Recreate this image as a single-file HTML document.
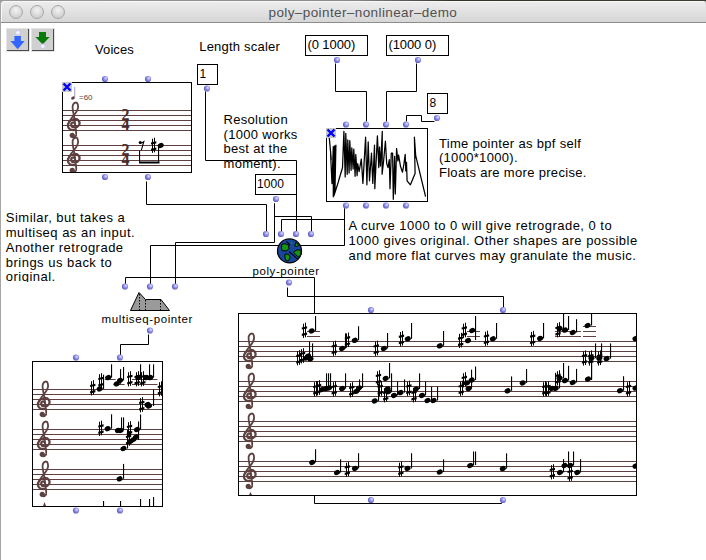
<!DOCTYPE html>
<html><head><meta charset="utf-8"><style>
html,body{margin:0;padding:0;background:#fff;}
body{width:706px;height:560px;position:relative;overflow:hidden;font-family:"Liberation Sans",sans-serif;}
svg{overflow:visible}
</style></head><body>

<div style="position:absolute;left:0;top:0;width:706px;height:1px;background:linear-gradient(to right,#9a9a9a 0%,#8a8a8a 50%,#30342a 64%,#3a4030 100%)"></div>
<div style="position:absolute;left:0;top:1px;width:706px;height:22px;background:#a6a6a6"></div>
<div style="position:absolute;left:1px;top:1px;width:705px;height:22px;border-radius:4px 4px 0 0;background:linear-gradient(#ededed,#d6d6d6);border-bottom:1px solid #8c8c8c;box-sizing:border-box;box-shadow:inset 1px 1px 0 #f8f8f8"></div>
<div style="position:absolute;left:0;top:1px;width:1px;height:559px;background:#a6a6a6"></div>
<div style="position:absolute;left:9px;top:5px;width:12px;height:12px;border-radius:50%;border:1px solid #a9a9a9;background:radial-gradient(circle at 50% 35%, #f4f4f4, #d0d0d0 70%, #c4c4c4)"></div><div style="position:absolute;left:30px;top:5px;width:12px;height:12px;border-radius:50%;border:1px solid #a9a9a9;background:radial-gradient(circle at 50% 35%, #f4f4f4, #d0d0d0 70%, #c4c4c4)"></div><div style="position:absolute;left:51px;top:5px;width:12px;height:12px;border-radius:50%;border:1px solid #a9a9a9;background:radial-gradient(circle at 50% 35%, #f4f4f4, #d0d0d0 70%, #c4c4c4)"></div><div style="position:absolute;left:6px;top:28px;width:24px;height:24px;box-sizing:border-box;background:#e3e3e3;padding:1px"><div style="width:22px;height:22px;background:#d0d0d0;box-shadow:inset -1px -1px 0 #4a4a4a"></div></div><div style="position:absolute;left:31px;top:28px;width:24px;height:24px;box-sizing:border-box;background:#e3e3e3;padding:1px"><div style="width:22px;height:22px;background:#d0d0d0;box-shadow:inset -1px -1px 0 #4a4a4a"></div></div>

<svg style="position:absolute;left:0;top:0" width="706" height="60">
 <rect x="14.4" y="36" width="6.5" height="5.5" fill="#3366ff"/>
 <polygon points="10.4,41 24.6,41 17.7,49.2" fill="#3366ff"/>
 <circle cx="17.9" cy="32.8" r="2.3" fill="#f4f4ff" stroke="#c8c8f4" stroke-width="1"/>
 <rect x="39" y="32" width="7" height="5.2" fill="#0a7a0a"/>
 <polygon points="35.4,37 49.6,37 42.7,44.5" fill="#0a7a0a"/>
 <circle cx="42.9" cy="46.3" r="2.3" fill="#f4f4ff" stroke="#c8c8f4" stroke-width="1"/>
</svg>
<svg style="position:absolute;left:0;top:0" width="706" height="560"><defs><clipPath id="clipBig"><rect x="239" y="314" width="397" height="181"/></clipPath><clipPath id="clipSmall"><rect x="33" y="362" width="129" height="144"/></clipPath><clipPath id="clipVoices"><rect x="63" y="83" width="128" height="89"/></clipPath><radialGradient id="ing" cx="0.62" cy="0.38" r="0.7">
<stop offset="0" stop-color="#e8e8ff"/><stop offset="0.4" stop-color="#9494ee"/><stop offset="1" stop-color="#5252b4"/></radialGradient></defs>
<polyline points="335.5,63.5 335.5,91.5 366.5,91.5 366.5,121.5" fill="none" stroke="#000" stroke-width="1"/><polyline points="416.5,63.5 416.5,91.5 386.5,91.5 386.5,121.5" fill="none" stroke="#000" stroke-width="1"/><polyline points="434.5,121.5 421.5,121.5 421.5,115.5 406.5,115.5 406.5,121.5" fill="none" stroke="#000" stroke-width="1"/><polyline points="205.5,91.5 205.5,160.5 296.5,160.5 296.5,231.5" fill="none" stroke="#000" stroke-width="1"/><polyline points="146.5,181.5 146.5,204.5 266.5,204.5 266.5,231.5" fill="none" stroke="#000" stroke-width="1"/><polyline points="274.5,203.5 274.5,216.5 311.5,216.5 311.5,231.5" fill="none" stroke="#000" stroke-width="1"/><polyline points="274.5,203.5 274.5,242.5 175.5,242.5 175.5,284.5" fill="none" stroke="#000" stroke-width="1"/><polyline points="344.5,208.5 344.5,219.5 281.5,219.5 281.5,231.5" fill="none" stroke="#000" stroke-width="1"/><polyline points="344.5,208.5 344.5,245.5 150.5,245.5 150.5,284.5" fill="none" stroke="#000" stroke-width="1"/><polyline points="287.5,287.5 287.5,296.5 503.5,296.5 503.5,308.5" fill="none" stroke="#000" stroke-width="1"/><polyline points="125.5,284.5 125.5,277.5 314.5,277.5 314.5,503.5 501.5,503.5 501.5,502.5" fill="none" stroke="#000" stroke-width="1"/><polyline points="148.5,334.5 148.5,344.5 120.5,344.5 120.5,355.5" fill="none" stroke="#000" stroke-width="1"/><rect x="62.5" y="82.5" width="129" height="90" fill="#fff" stroke="#000" stroke-width="1"/><g clip-path="url(#clipVoices)"><rect x="63" y="110" width="128" height="1" fill="#5e4040"/><rect x="63" y="115" width="128" height="1" fill="#5e4040"/><rect x="63" y="120" width="128" height="1" fill="#5e4040"/><rect x="63" y="125" width="128" height="1" fill="#5e4040"/><rect x="63" y="130" width="128" height="1" fill="#5e4040"/><rect x="63" y="145" width="128" height="1" fill="#5e4040"/><rect x="63" y="150" width="128" height="1" fill="#5e4040"/><rect x="63" y="155" width="128" height="1" fill="#5e4040"/><rect x="63" y="160" width="128" height="1" fill="#5e4040"/><rect x="63" y="165" width="128" height="1" fill="#5e4040"/><g transform="translate(67,110) scale(5)" fill="none" stroke="#5e4040" stroke-linecap="round"><path d="M1.6,2.75 C1.35,2.3 0.8,2.45 0.85,3.0 C0.95,3.6 2.0,3.7 2.4,3.05 C2.75,2.4 2.2,1.7 1.45,1.8 C0.6,1.9 0.1,2.6 0.2,3.25 C0.3,3.9 1.0,4.1 1.65,4.0" stroke-width="0.45"/><path d="M0.2,3.25 C0.2,2.3 0.9,1.6 1.5,0.9 C2.1,0.2 2.35,-0.5 2.15,-1.15 C2.0,-1.6 1.4,-1.7 1.15,-0.9 C1.0,-0.3 1.3,0.6 1.5,1.8 L1.85,4.6" stroke-width="0.36"/><path d="M1.85,4.6 C1.95,5.3 1.5,5.6 1.0,5.4" stroke-width="0.32"/><circle cx="1.05" cy="5.05" r="0.52" fill="#5e4040" stroke="none"/></g><g transform="translate(67,145) scale(5)" fill="none" stroke="#5e4040" stroke-linecap="round"><path d="M1.6,2.75 C1.35,2.3 0.8,2.45 0.85,3.0 C0.95,3.6 2.0,3.7 2.4,3.05 C2.75,2.4 2.2,1.7 1.45,1.8 C0.6,1.9 0.1,2.6 0.2,3.25 C0.3,3.9 1.0,4.1 1.65,4.0" stroke-width="0.45"/><path d="M0.2,3.25 C0.2,2.3 0.9,1.6 1.5,0.9 C2.1,0.2 2.35,-0.5 2.15,-1.15 C2.0,-1.6 1.4,-1.7 1.15,-0.9 C1.0,-0.3 1.3,0.6 1.5,1.8 L1.85,4.6" stroke-width="0.36"/><path d="M1.85,4.6 C1.95,5.3 1.5,5.6 1.0,5.4" stroke-width="0.32"/><circle cx="1.05" cy="5.05" r="0.52" fill="#5e4040" stroke="none"/></g><ellipse cx="73" cy="98" rx="2" ry="1.5" transform="rotate(-25 73 98)" fill="#5e4040"/><rect x="74.3" y="87" width="0.9" height="11" fill="#9c8cc0"/><path d="M140,143.2 Q142,143 143.8,141.6 L141.3,150.4" fill="none" stroke="#000" stroke-width="1.1"/><circle cx="140.2" cy="142.4" r="1.5" fill="#000"/><g fill="#000"><rect x="152" y="138.7" width="1" height="14.2"/><rect x="154" y="137.7" width="1" height="14.6"/><polygon points="151.0,142.4 156.29999999999998,141.3 156.29999999999998,143.5 151.0,144.6"/><polygon points="151.0,148.7 156.29999999999998,147.6 156.29999999999998,149.8 151.0,150.9"/></g><ellipse cx="160.7" cy="145.5" rx="3.1" ry="2.55" transform="rotate(-22 160.7 145.5)" fill="#000"/><rect x="139" y="150.5" width="1.1" height="12.5" fill="#000"/><rect x="158" y="147" width="1.1" height="16" fill="#000"/><rect x="139" y="161.5" width="20.5" height="2" fill="#000"/></g><rect x="62" y="82" width="10" height="10" fill="#c8c8c8"/><path d="M63.5,83.5 L70.5,90.5 M70.5,83.5 L63.5,90.5" stroke="#0000ff" stroke-width="2.4"/><rect x="197.5" y="64.5" width="20" height="20" fill="#fff" stroke="#000" stroke-width="1"/><rect x="305.5" y="35.5" width="62" height="20" fill="#fff" stroke="#000" stroke-width="1"/><rect x="386.5" y="35.5" width="62" height="20" fill="#fff" stroke="#000" stroke-width="1"/><rect x="427.5" y="93.5" width="20" height="20" fill="#fff" stroke="#000" stroke-width="1"/><rect x="255.5" y="174.5" width="41" height="20" fill="#fff" stroke="#000" stroke-width="1"/><rect x="326.5" y="128.5" width="101" height="73" fill="#fff" stroke="#000" stroke-width="1"/><polyline points="329.3,137.9 331.3,159.7 330.6,154.5 332,183.6 333.3,146.5 333.3,196.8 334.6,145.9 335,190 335.9,145.2 334,195.5 338,183 340,176 342.5,167.7 343.9,131.3 345.2,177 345.8,133.3 347.2,174.3 347.8,139.9 349.1,173 349.8,140.6 351.1,170.3 351.8,147.8 353.1,169 353.8,149.2 355.1,176.3 355.8,154.5 357.1,175.6 357.7,163.7 359.1,171.6 361.3,159 362.9,183.4 365.6,137.2 366.9,184.8 368.2,141.9 369.5,180.8 371.5,153.1 372.8,183.4 374.5,145.2 374.8,188.7 377.4,135.9 378.8,167.6 379.5,147 380.5,166 382.3,131.3 382.1,174.2 383.5,162 385.4,141.2 386.7,163.6 388,167.6 389.3,159.7 390,188.7 391.3,153.1 392.6,153.1 393.3,199.3 394.6,156.4 395.3,194 396.6,148.5 397.9,161 398.6,155 400.5,166.3 402.5,172.2 403.8,165 405.2,154.4 405.8,171 406.5,162.3 407.1,180.8 410.4,184.8 415.1,173.5 414.4,137.2 415.7,155.7 425.6,196.6" fill="none" stroke="#000" stroke-width="1.25" stroke-linejoin="round"/><rect x="326" y="128" width="10" height="10" fill="#c8c8c8"/><path d="M327.5,129.5 L334.5,136.5 M334.5,129.5 L327.5,136.5" stroke="#0000ff" stroke-width="2.4"/><circle cx="289.5" cy="250.9" r="12" fill="#17479c" stroke="#000" stroke-width="1.3"/><polygon points="281.8,244.5 285,243.6 288.6,245.2 288.9,248.6 286.8,250.8 282.4,250.8 281.4,248" fill="#139413" stroke="#000" stroke-width="1"/><polygon points="285,254 288.5,254.3 290.2,257 288.6,260.8 286,260.8 284.8,257" fill="#139413" stroke="#000" stroke-width="1"/><polygon points="293.3,252.2 297,249.8 301.2,250.3 300.7,254.6 298.5,257.3 295.8,254.6" fill="#139413" stroke="#000" stroke-width="1"/><polygon points="295.8,242.3 298.7,245 297,246.7 294.8,246" fill="#139413" stroke="#000" stroke-width="1"/><rect x="290.8" y="242.3" width="1.4" height="2" fill="#169a16"/><path d="M286.5,241.3 L290,245 M289,251.5 L297.5,259" stroke="#000" stroke-width="1.1" fill="none"/><polygon points="130.5,310.5 139,292.5 145.5,299.5 161,299.5 169.5,310.5" fill="#9a9a9a" stroke="#000" stroke-width="1"/><path d="M139.5,294 V310 M145.5,300 V310 M160.5,300 V310" stroke="#000" stroke-width="1" stroke-dasharray="1.5,1.5"/><rect x="238.5" y="313.5" width="398" height="182" fill="#fff" stroke="#000" stroke-width="1"/><g clip-path="url(#clipBig)"><rect x="239" y="341" width="397" height="1" fill="#5e4040"/><rect x="239" y="346" width="397" height="1" fill="#5e4040"/><rect x="239" y="351" width="397" height="1" fill="#5e4040"/><rect x="239" y="356" width="397" height="1" fill="#5e4040"/><rect x="239" y="361" width="397" height="1" fill="#5e4040"/><g transform="translate(243,341) scale(5)" fill="none" stroke="#5e4040" stroke-linecap="round"><path d="M1.6,2.75 C1.35,2.3 0.8,2.45 0.85,3.0 C0.95,3.6 2.0,3.7 2.4,3.05 C2.75,2.4 2.2,1.7 1.45,1.8 C0.6,1.9 0.1,2.6 0.2,3.25 C0.3,3.9 1.0,4.1 1.65,4.0" stroke-width="0.45"/><path d="M0.2,3.25 C0.2,2.3 0.9,1.6 1.5,0.9 C2.1,0.2 2.35,-0.5 2.15,-1.15 C2.0,-1.6 1.4,-1.7 1.15,-0.9 C1.0,-0.3 1.3,0.6 1.5,1.8 L1.85,4.6" stroke-width="0.36"/><path d="M1.85,4.6 C1.95,5.3 1.5,5.6 1.0,5.4" stroke-width="0.32"/><circle cx="1.05" cy="5.05" r="0.52" fill="#5e4040" stroke="none"/></g><rect x="239" y="381" width="397" height="1" fill="#5e4040"/><rect x="239" y="386" width="397" height="1" fill="#5e4040"/><rect x="239" y="391" width="397" height="1" fill="#5e4040"/><rect x="239" y="396" width="397" height="1" fill="#5e4040"/><rect x="239" y="401" width="397" height="1" fill="#5e4040"/><g transform="translate(243,381) scale(5)" fill="none" stroke="#5e4040" stroke-linecap="round"><path d="M1.6,2.75 C1.35,2.3 0.8,2.45 0.85,3.0 C0.95,3.6 2.0,3.7 2.4,3.05 C2.75,2.4 2.2,1.7 1.45,1.8 C0.6,1.9 0.1,2.6 0.2,3.25 C0.3,3.9 1.0,4.1 1.65,4.0" stroke-width="0.45"/><path d="M0.2,3.25 C0.2,2.3 0.9,1.6 1.5,0.9 C2.1,0.2 2.35,-0.5 2.15,-1.15 C2.0,-1.6 1.4,-1.7 1.15,-0.9 C1.0,-0.3 1.3,0.6 1.5,1.8 L1.85,4.6" stroke-width="0.36"/><path d="M1.85,4.6 C1.95,5.3 1.5,5.6 1.0,5.4" stroke-width="0.32"/><circle cx="1.05" cy="5.05" r="0.52" fill="#5e4040" stroke="none"/></g><rect x="239" y="421" width="397" height="1" fill="#5e4040"/><rect x="239" y="426" width="397" height="1" fill="#5e4040"/><rect x="239" y="431" width="397" height="1" fill="#5e4040"/><rect x="239" y="436" width="397" height="1" fill="#5e4040"/><rect x="239" y="441" width="397" height="1" fill="#5e4040"/><g transform="translate(243,421) scale(5)" fill="none" stroke="#5e4040" stroke-linecap="round"><path d="M1.6,2.75 C1.35,2.3 0.8,2.45 0.85,3.0 C0.95,3.6 2.0,3.7 2.4,3.05 C2.75,2.4 2.2,1.7 1.45,1.8 C0.6,1.9 0.1,2.6 0.2,3.25 C0.3,3.9 1.0,4.1 1.65,4.0" stroke-width="0.45"/><path d="M0.2,3.25 C0.2,2.3 0.9,1.6 1.5,0.9 C2.1,0.2 2.35,-0.5 2.15,-1.15 C2.0,-1.6 1.4,-1.7 1.15,-0.9 C1.0,-0.3 1.3,0.6 1.5,1.8 L1.85,4.6" stroke-width="0.36"/><path d="M1.85,4.6 C1.95,5.3 1.5,5.6 1.0,5.4" stroke-width="0.32"/><circle cx="1.05" cy="5.05" r="0.52" fill="#5e4040" stroke="none"/></g><rect x="239" y="461" width="397" height="1" fill="#5e4040"/><rect x="239" y="466" width="397" height="1" fill="#5e4040"/><rect x="239" y="471" width="397" height="1" fill="#5e4040"/><rect x="239" y="476" width="397" height="1" fill="#5e4040"/><rect x="239" y="481" width="397" height="1" fill="#5e4040"/><g transform="translate(243,461) scale(5)" fill="none" stroke="#5e4040" stroke-linecap="round"><path d="M1.6,2.75 C1.35,2.3 0.8,2.45 0.85,3.0 C0.95,3.6 2.0,3.7 2.4,3.05 C2.75,2.4 2.2,1.7 1.45,1.8 C0.6,1.9 0.1,2.6 0.2,3.25 C0.3,3.9 1.0,4.1 1.65,4.0" stroke-width="0.45"/><path d="M0.2,3.25 C0.2,2.3 0.9,1.6 1.5,0.9 C2.1,0.2 2.35,-0.5 2.15,-1.15 C2.0,-1.6 1.4,-1.7 1.15,-0.9 C1.0,-0.3 1.3,0.6 1.5,1.8 L1.85,4.6" stroke-width="0.36"/><path d="M1.85,4.6 C1.95,5.3 1.5,5.6 1.0,5.4" stroke-width="0.32"/><circle cx="1.05" cy="5.05" r="0.52" fill="#5e4040" stroke="none"/></g><path d="M249,495 L250.5,492 L252,495 Z" fill="#5e4040"/><g fill="#000"><rect x="303" y="323.7" width="1" height="14.2"/><rect x="305" y="322.7" width="1" height="14.6"/><polygon points="301.79999999999995,327.4 307.09999999999997,326.3 307.09999999999997,328.5 301.79999999999995,329.6"/><polygon points="301.79999999999995,333.7 307.09999999999997,332.6 307.09999999999997,334.8 301.79999999999995,335.9"/></g><rect x="307" y="331" width="13" height="1" fill="#5e4040"/><rect x="307" y="336" width="13" height="1" fill="#5e4040"/><ellipse cx="311.7" cy="330.9" rx="3.1" ry="2.55" transform="rotate(-22 311.7 330.9)" fill="#000"/><rect x="315" y="316" width="1.1" height="14.899999999999977" fill="#000"/><g fill="#000"><rect x="297" y="351.2" width="1" height="14.2"/><rect x="299" y="350.2" width="1" height="14.6"/><polygon points="296.2,354.9 301.5,353.8 301.5,356.0 296.2,357.1"/><polygon points="296.2,361.2 301.5,360.1 301.5,362.3 296.2,363.4"/></g><g fill="#000"><rect x="301" y="349.2" width="1" height="14.2"/><rect x="303" y="348.2" width="1" height="14.6"/><polygon points="299.9,352.9 305.2,351.8 305.2,354.0 299.9,355.1"/><polygon points="299.9,359.2 305.2,358.1 305.2,360.3 299.9,361.4"/></g><ellipse cx="306.5" cy="358" rx="3.1" ry="2.55" transform="rotate(-22 306.5 358)" fill="#000"/><ellipse cx="308" cy="356" rx="3.1" ry="2.55" transform="rotate(-22 308 356)" fill="#000"/><rect x="309" y="341.5" width="1.1" height="15.5" fill="#000"/><rect x="312" y="343.4" width="1.1" height="13.600000000000023" fill="#000"/><ellipse cx="310.5" cy="359" rx="3.1" ry="2.55" transform="rotate(-22 310.5 359)" fill="#000"/><g fill="#000"><rect x="333" y="341.7" width="1" height="14.2"/><rect x="335" y="340.7" width="1" height="14.6"/><polygon points="331.59999999999997,345.4 336.9,344.3 336.9,346.5 331.59999999999997,347.6"/><polygon points="331.59999999999997,351.7 336.9,350.6 336.9,352.8 331.59999999999997,353.9"/></g><ellipse cx="342.1" cy="348.5" rx="3.1" ry="2.55" transform="rotate(-22 342.1 348.5)" fill="#000"/><rect x="345" y="333.3" width="1.1" height="15.199999999999989" fill="#000"/><g fill="#000"><rect x="346" y="333.5" width="1" height="14.2"/><rect x="348" y="332.5" width="1" height="14.6"/><polygon points="344.79999999999995,337.2 350.09999999999997,336.1 350.09999999999997,338.3 344.79999999999995,339.40000000000003"/><polygon points="344.79999999999995,343.5 350.09999999999997,342.40000000000003 350.09999999999997,344.6 344.79999999999995,345.7"/></g><ellipse cx="354.8" cy="340.3" rx="3.1" ry="2.55" transform="rotate(-22 354.8 340.3)" fill="#000"/><rect x="358" y="326.3" width="1.1" height="14.0" fill="#000"/><g fill="#000"><rect x="375" y="341.7" width="1" height="14.2"/><rect x="377" y="340.7" width="1" height="14.6"/><polygon points="373.59999999999997,345.4 378.9,344.3 378.9,346.5 373.59999999999997,347.6"/><polygon points="373.59999999999997,351.7 378.9,350.6 378.9,352.8 373.59999999999997,353.9"/></g><ellipse cx="383.9" cy="348.5" rx="3.1" ry="2.55" transform="rotate(-22 383.9 348.5)" fill="#000"/><rect x="387" y="333" width="1.1" height="15.5" fill="#000"/><g fill="#000"><rect x="400" y="332.0" width="1" height="14.2"/><rect x="402" y="331.0" width="1" height="14.6"/><polygon points="398.79999999999995,335.7 404.09999999999997,334.6 404.09999999999997,336.8 398.79999999999995,337.90000000000003"/><polygon points="398.79999999999995,342.0 404.09999999999997,340.90000000000003 404.09999999999997,343.1 398.79999999999995,344.2"/></g><ellipse cx="407.8" cy="338.8" rx="3.1" ry="2.55" transform="rotate(-22 407.8 338.8)" fill="#000"/><rect x="411" y="323" width="1.1" height="15.800000000000011" fill="#000"/><ellipse cx="439.8" cy="345.8" rx="3.1" ry="2.55" transform="rotate(-22 439.8 345.8)" fill="#000"/><rect x="443" y="331" width="1.1" height="14.800000000000011" fill="#000"/><g fill="#000"><rect x="459" y="333.8" width="1" height="14.2"/><rect x="461" y="332.8" width="1" height="14.6"/><polygon points="458.0,337.5 463.3,336.40000000000003 463.3,338.6 458.0,339.70000000000005"/><polygon points="458.0,343.8 463.3,342.70000000000005 463.3,344.90000000000003 458.0,346.0"/></g><g fill="#000"><rect x="463" y="323.7" width="1" height="14.2"/><rect x="465" y="322.7" width="1" height="14.6"/><polygon points="461.7,327.4 467.0,326.3 467.0,328.5 461.7,329.6"/><polygon points="461.7,333.7 467.0,332.6 467.0,334.8 461.7,335.9"/></g><rect x="467" y="331" width="13" height="1" fill="#5e4040"/><rect x="467" y="336" width="13" height="1" fill="#5e4040"/><ellipse cx="468" cy="340.6" rx="3.1" ry="2.55" transform="rotate(-22 468 340.6)" fill="#000"/><ellipse cx="472.2" cy="330.5" rx="3.1" ry="2.55" transform="rotate(-22 472.2 330.5)" fill="#000"/><rect x="475" y="316" width="1.1" height="24" fill="#000"/><g fill="#000"><rect x="485" y="331.7" width="1" height="14.2"/><rect x="487" y="330.7" width="1" height="14.6"/><polygon points="483.79999999999995,335.4 489.09999999999997,334.3 489.09999999999997,336.5 483.79999999999995,337.6"/><polygon points="483.79999999999995,341.7 489.09999999999997,340.6 489.09999999999997,342.8 483.79999999999995,343.9"/></g><ellipse cx="492.9" cy="338.8" rx="3.1" ry="2.55" transform="rotate(-22 492.9 338.8)" fill="#000"/><rect x="496" y="323" width="1.1" height="15.800000000000011" fill="#000"/><g fill="#000"><rect x="531" y="331.9" width="1" height="14.2"/><rect x="533" y="330.9" width="1" height="14.6"/><polygon points="530.0,335.59999999999997 535.3000000000001,334.5 535.3000000000001,336.7 530.0,337.8"/><polygon points="530.0,341.9 535.3000000000001,340.8 535.3000000000001,343.0 530.0,344.09999999999997"/></g><ellipse cx="540.1" cy="338.4" rx="3.1" ry="2.55" transform="rotate(-22 540.1 338.4)" fill="#000"/><rect x="543" y="323" width="1.1" height="15.399999999999977" fill="#000"/><rect x="555" y="331" width="26" height="1" fill="#5e4040"/><rect x="555" y="336" width="26" height="1" fill="#5e4040"/><g fill="#000"><rect x="557" y="323.2" width="1" height="14.2"/><rect x="559" y="322.2" width="1" height="14.6"/><polygon points="555.4,326.9 560.7,325.8 560.7,328.0 555.4,329.1"/><polygon points="555.4,333.2 560.7,332.1 560.7,334.3 555.4,335.4"/></g><ellipse cx="559.6" cy="328.6" rx="3.1" ry="2.55" transform="rotate(-22 559.6 328.6)" fill="#000"/><ellipse cx="565" cy="330.1" rx="3.1" ry="2.55" transform="rotate(-22 565 330.1)" fill="#000"/><rect x="563" y="314" width="1.1" height="15" fill="#000"/><rect x="568" y="316" width="1.1" height="14" fill="#000"/><ellipse cx="572.8" cy="332.5" rx="3.1" ry="2.55" transform="rotate(-22 572.8 332.5)" fill="#000"/><rect x="576" y="319.2" width="1.1" height="13.300000000000011" fill="#000"/><rect x="583" y="326" width="13" height="1" fill="#5e4040"/><rect x="583" y="331" width="13" height="1" fill="#5e4040"/><rect x="583" y="336" width="13" height="1" fill="#5e4040"/><ellipse cx="587.6" cy="325.5" rx="3.1" ry="2.55" transform="rotate(-22 587.6 325.5)" fill="#000"/><rect x="591" y="314" width="1.1" height="11.5" fill="#000"/><g fill="#000"><rect x="583" y="351.4" width="1" height="14.2"/><rect x="585" y="350.4" width="1" height="14.6"/><polygon points="581.9,355.09999999999997 587.2,354.0 587.2,356.2 581.9,357.3"/><polygon points="581.9,361.4 587.2,360.3 587.2,362.5 581.9,363.59999999999997"/></g><g fill="#000"><rect x="589" y="351.4" width="1" height="14.2"/><rect x="591" y="350.4" width="1" height="14.6"/><polygon points="588.1999999999999,355.09999999999997 593.5,354.0 593.5,356.2 588.1999999999999,357.3"/><polygon points="588.1999999999999,361.4 593.5,360.3 593.5,362.5 588.1999999999999,363.59999999999997"/></g><g fill="#000"><rect x="598" y="351.4" width="1" height="14.2"/><rect x="600" y="350.4" width="1" height="14.6"/><polygon points="597.0,355.09999999999997 602.3000000000001,354.0 602.3000000000001,356.2 597.0,357.3"/><polygon points="597.0,361.4 602.3000000000001,360.3 602.3000000000001,362.5 597.0,363.59999999999997"/></g><ellipse cx="591.5" cy="358.2" rx="3.1" ry="2.55" transform="rotate(-22 591.5 358.2)" fill="#000"/><rect x="595" y="343.4" width="1.1" height="14.800000000000011" fill="#000"/><ellipse cx="599.3" cy="358.2" rx="3.1" ry="2.55" transform="rotate(-22 599.3 358.2)" fill="#000"/><rect x="601" y="343.4" width="1.1" height="14.800000000000011" fill="#000"/><ellipse cx="606.6" cy="358.6" rx="3.1" ry="2.55" transform="rotate(-22 606.6 358.6)" fill="#000"/><rect x="610" y="343.4" width="1.1" height="15.200000000000045" fill="#000"/><rect x="591" y="358" width="1.1" height="22" fill="#000"/><ellipse cx="635.5" cy="338.5" rx="3.1" ry="2.55" transform="rotate(-22 635.5 338.5)" fill="#000"/><g fill="#000"><rect x="314" y="382.2" width="1" height="14.2"/><rect x="316" y="381.2" width="1" height="14.6"/><polygon points="313.2,385.9 318.5,384.8 318.5,387.0 313.2,388.1"/><polygon points="313.2,392.2 318.5,391.1 318.5,393.3 313.2,394.4"/></g><g fill="#000"><rect x="317" y="381.2" width="1" height="14.2"/><rect x="319" y="380.2" width="1" height="14.6"/><polygon points="315.9,384.9 321.2,383.8 321.2,386.0 315.9,387.1"/><polygon points="315.9,391.2 321.2,390.1 321.2,392.3 315.9,393.4"/></g><ellipse cx="322" cy="389.5" rx="3.1" ry="2.55" transform="rotate(-22 322 389.5)" fill="#000"/><ellipse cx="326" cy="388.6" rx="3.1" ry="2.55" transform="rotate(-22 326 388.6)" fill="#000"/><ellipse cx="329" cy="388" rx="3.1" ry="2.55" transform="rotate(-22 329 388)" fill="#000"/><rect x="326" y="373.3" width="1.1" height="14.699999999999989" fill="#000"/><rect x="328" y="373.3" width="1.1" height="14.699999999999989" fill="#000"/><rect x="330" y="373.3" width="1.1" height="14.699999999999989" fill="#000"/><g fill="#000"><rect x="333" y="382.2" width="1" height="14.2"/><rect x="335" y="381.2" width="1" height="14.6"/><polygon points="331.59999999999997,385.9 336.9,384.8 336.9,387.0 331.59999999999997,388.1"/><polygon points="331.59999999999997,392.2 336.9,391.1 336.9,393.3 331.59999999999997,394.4"/></g><ellipse cx="342.1" cy="388.6" rx="3.1" ry="2.55" transform="rotate(-22 342.1 388.6)" fill="#000"/><rect x="345" y="373.3" width="1.1" height="15.300000000000011" fill="#000"/><g fill="#000"><rect x="350" y="383.2" width="1" height="14.2"/><rect x="352" y="382.2" width="1" height="14.6"/><polygon points="349.09999999999997,386.9 354.4,385.8 354.4,388.0 349.09999999999997,389.1"/><polygon points="349.09999999999997,393.2 354.4,392.1 354.4,394.3 349.09999999999997,395.4"/></g><ellipse cx="356.3" cy="391.3" rx="3.1" ry="2.55" transform="rotate(-22 356.3 391.3)" fill="#000"/><rect x="359" y="379.4" width="1.1" height="11.900000000000034" fill="#000"/><ellipse cx="359" cy="388" rx="3.1" ry="2.55" transform="rotate(-22 359 388)" fill="#000"/><rect x="362" y="373.3" width="1.1" height="14.699999999999989" fill="#000"/><g fill="#000"><rect x="377" y="371.2" width="1" height="14.2"/><rect x="379" y="370.2" width="1" height="14.6"/><polygon points="375.79999999999995,374.9 381.09999999999997,373.8 381.09999999999997,376.0 375.79999999999995,377.1"/><polygon points="375.79999999999995,381.2 381.09999999999997,380.1 381.09999999999997,382.3 375.79999999999995,383.4"/></g><ellipse cx="385.7" cy="378.4" rx="3.1" ry="2.55" transform="rotate(-22 385.7 378.4)" fill="#000"/><rect x="389" y="363" width="1.1" height="15.399999999999977" fill="#000"/><ellipse cx="374.7" cy="400.9" rx="3.1" ry="2.55" transform="rotate(-22 374.7 400.9)" fill="#000"/><rect x="378" y="383.4" width="1.1" height="17.5" fill="#000"/><g fill="#000"><rect x="379" y="382.2" width="1" height="14.2"/><rect x="381" y="381.2" width="1" height="14.6"/><polygon points="377.59999999999997,385.9 382.9,384.8 382.9,387.0 377.59999999999997,388.1"/><polygon points="377.59999999999997,392.2 382.9,391.1 382.9,393.3 377.59999999999997,394.4"/></g><g fill="#000"><rect x="384" y="388.2" width="1" height="14.2"/><rect x="386" y="387.2" width="1" height="14.6"/><polygon points="383.09999999999997,391.9 388.4,390.8 388.4,393.0 383.09999999999997,394.1"/><polygon points="383.09999999999997,398.2 388.4,397.1 388.4,399.3 383.09999999999997,400.4"/></g><ellipse cx="387.6" cy="388.9" rx="3.1" ry="2.55" transform="rotate(-22 387.6 388.9)" fill="#000"/><ellipse cx="388.5" cy="391.7" rx="3.1" ry="2.55" transform="rotate(-22 388.5 391.7)" fill="#000"/><rect x="391" y="373.3" width="1.1" height="18.399999999999977" fill="#000"/><ellipse cx="394" cy="395.4" rx="3.1" ry="2.55" transform="rotate(-22 394 395.4)" fill="#000"/><rect x="397" y="381.6" width="1.1" height="13.799999999999955" fill="#000"/><ellipse cx="400.5" cy="392.6" rx="3.1" ry="2.55" transform="rotate(-22 400.5 392.6)" fill="#000"/><rect x="404" y="379.4" width="1.1" height="13.200000000000045" fill="#000"/><g fill="#000"><rect x="407" y="381.7" width="1" height="14.2"/><rect x="409" y="380.7" width="1" height="14.6"/><polygon points="406.2,385.4 411.5,384.3 411.5,386.5 406.2,387.6"/><polygon points="406.2,391.7 411.5,390.6 411.5,392.8 406.2,393.9"/></g><g fill="#000"><rect x="413" y="388.2" width="1" height="14.2"/><rect x="415" y="387.2" width="1" height="14.6"/><polygon points="411.4,391.9 416.7,390.8 416.7,393.0 411.4,394.1"/><polygon points="411.4,398.2 416.7,397.1 416.7,399.3 411.4,400.4"/></g><ellipse cx="416" cy="389" rx="3.1" ry="2.55" transform="rotate(-22 416 389)" fill="#000"/><rect x="419" y="373.4" width="1.1" height="15.600000000000023" fill="#000"/><ellipse cx="422" cy="395.4" rx="3.1" ry="2.55" transform="rotate(-22 422 395.4)" fill="#000"/><rect x="425" y="381.6" width="1.1" height="13.799999999999955" fill="#000"/><ellipse cx="427.5" cy="400.5" rx="3.1" ry="2.55" transform="rotate(-22 427.5 400.5)" fill="#000"/><rect x="431" y="386.7" width="1.1" height="13.800000000000011" fill="#000"/><ellipse cx="433.6" cy="400.5" rx="3.1" ry="2.55" transform="rotate(-22 433.6 400.5)" fill="#000"/><rect x="437" y="386.7" width="1.1" height="13.800000000000011" fill="#000"/><g fill="#000"><rect x="460" y="381.7" width="1" height="14.2"/><rect x="462" y="380.7" width="1" height="14.6"/><polygon points="458.59999999999997,385.4 463.9,384.3 463.9,386.5 458.59999999999997,387.6"/><polygon points="458.59999999999997,391.7 463.9,390.6 463.9,392.8 458.59999999999997,393.9"/></g><g fill="#000"><rect x="463" y="373.2" width="1" height="14.2"/><rect x="465" y="372.2" width="1" height="14.6"/><polygon points="461.7,376.9 467.0,375.8 467.0,378.0 461.7,379.1"/><polygon points="461.7,383.2 467.0,382.1 467.0,384.3 461.7,385.4"/></g><ellipse cx="467" cy="382.9" rx="3.1" ry="2.55" transform="rotate(-22 467 382.9)" fill="#000"/><ellipse cx="468.6" cy="388.6" rx="3.1" ry="2.55" transform="rotate(-22 468.6 388.6)" fill="#000"/><rect x="471" y="369.6" width="1.1" height="19.0" fill="#000"/><ellipse cx="471.7" cy="380.1" rx="3.1" ry="2.55" transform="rotate(-22 471.7 380.1)" fill="#000"/><rect x="475" y="366.5" width="1.1" height="13.600000000000023" fill="#000"/><ellipse cx="507.6" cy="390.8" rx="3.1" ry="2.55" transform="rotate(-22 507.6 390.8)" fill="#000"/><rect x="511" y="376.4" width="1.1" height="14.400000000000034" fill="#000"/><ellipse cx="522.7" cy="382.9" rx="3.1" ry="2.55" transform="rotate(-22 522.7 382.9)" fill="#000"/><rect x="526" y="369" width="1.1" height="13.899999999999977" fill="#000"/><g fill="#000"><rect x="543" y="382.2" width="1" height="14.2"/><rect x="545" y="381.2" width="1" height="14.6"/><polygon points="542.1999999999999,385.9 547.5,384.8 547.5,387.0 542.1999999999999,388.1"/><polygon points="542.1999999999999,392.2 547.5,391.1 547.5,393.3 542.1999999999999,394.4"/></g><g fill="#000"><rect x="546" y="382.2" width="1" height="14.2"/><rect x="548" y="381.2" width="1" height="14.6"/><polygon points="545.3,385.9 550.6,384.8 550.6,387.0 545.3,388.1"/><polygon points="545.3,392.2 550.6,391.1 550.6,393.3 545.3,394.4"/></g><g fill="#000"><rect x="557" y="371.2" width="1" height="14.2"/><rect x="559" y="370.2" width="1" height="14.6"/><polygon points="555.4,374.9 560.7,373.8 560.7,376.0 555.4,377.1"/><polygon points="555.4,381.2 560.7,380.1 560.7,382.3 555.4,383.4"/></g><ellipse cx="551.8" cy="388.4" rx="3.1" ry="2.55" transform="rotate(-22 551.8 388.4)" fill="#000"/><rect x="555" y="372.8" width="1.1" height="15.599999999999966" fill="#000"/><ellipse cx="555.7" cy="388.4" rx="3.1" ry="2.55" transform="rotate(-22 555.7 388.4)" fill="#000"/><rect x="559" y="372.8" width="1.1" height="15.599999999999966" fill="#000"/><ellipse cx="559.6" cy="378.2" rx="3.1" ry="2.55" transform="rotate(-22 559.6 378.2)" fill="#000"/><rect x="563" y="363" width="1.1" height="15.199999999999989" fill="#000"/><ellipse cx="565" cy="380.6" rx="3.1" ry="2.55" transform="rotate(-22 565 380.6)" fill="#000"/><rect x="568" y="365.8" width="1.1" height="14.800000000000011" fill="#000"/><ellipse cx="572.8" cy="382.5" rx="3.1" ry="2.55" transform="rotate(-22 572.8 382.5)" fill="#000"/><rect x="576" y="368.9" width="1.1" height="13.600000000000023" fill="#000"/><ellipse cx="588" cy="379" rx="3.1" ry="2.55" transform="rotate(-22 588 379)" fill="#000"/><rect x="591" y="358" width="1.1" height="21" fill="#000"/><ellipse cx="620" cy="390.7" rx="3.1" ry="2.55" transform="rotate(-22 620 390.7)" fill="#000"/><rect x="623" y="376.2" width="1.1" height="14.5" fill="#000"/><g fill="#000"><rect x="627" y="382.2" width="1" height="14.2"/><rect x="629" y="381.2" width="1" height="14.6"/><polygon points="625.9,385.9 631.2,384.8 631.2,387.0 625.9,388.1"/><polygon points="625.9,392.2 631.2,391.1 631.2,393.3 625.9,394.4"/></g><ellipse cx="635.5" cy="388" rx="3.1" ry="2.55" transform="rotate(-22 635.5 388)" fill="#000"/><ellipse cx="312.2" cy="462.4" rx="3.1" ry="2.55" transform="rotate(-22 312.2 462.4)" fill="#000"/><rect x="315" y="449.2" width="1.1" height="13.199999999999989" fill="#000"/><ellipse cx="337" cy="472.5" rx="3.1" ry="2.55" transform="rotate(-22 337 472.5)" fill="#000"/><rect x="340" y="459.3" width="1.1" height="13.199999999999989" fill="#000"/><g fill="#000"><rect x="346" y="462.7" width="1" height="14.2"/><rect x="348" y="461.7" width="1" height="14.6"/><polygon points="344.7,466.4 350.0,465.3 350.0,467.5 344.7,468.6"/><polygon points="344.7,472.7 350.0,471.6 350.0,473.8 344.7,474.9"/></g><ellipse cx="355" cy="468.4" rx="3.1" ry="2.55" transform="rotate(-22 355 468.4)" fill="#000"/><rect x="358" y="453.2" width="1.1" height="15.199999999999989" fill="#000"/><g fill="#000"><rect x="399" y="462.7" width="1" height="14.2"/><rect x="401" y="461.7" width="1" height="14.6"/><polygon points="398.2,466.4 403.5,465.3 403.5,467.5 398.2,468.6"/><polygon points="398.2,472.7 403.5,471.6 403.5,473.8 398.2,474.9"/></g><ellipse cx="407.5" cy="468.4" rx="3.1" ry="2.55" transform="rotate(-22 407.5 468.4)" fill="#000"/><rect x="411" y="453.2" width="1.1" height="15.199999999999989" fill="#000"/><ellipse cx="439.8" cy="472" rx="3.1" ry="2.55" transform="rotate(-22 439.8 472)" fill="#000"/><rect x="443" y="459.3" width="1.1" height="12.699999999999989" fill="#000"/><ellipse cx="470.2" cy="465.5" rx="3.1" ry="2.55" transform="rotate(-22 470.2 465.5)" fill="#000"/><rect x="473" y="451.5" width="1.1" height="14.0" fill="#000"/><rect x="475" y="451.5" width="1.1" height="13.5" fill="#000"/><ellipse cx="502.8" cy="468.6" rx="3.1" ry="2.55" transform="rotate(-22 502.8 468.6)" fill="#000"/><rect x="506" y="453.3" width="1.1" height="15.300000000000011" fill="#000"/><g fill="#000"><rect x="551" y="465.2" width="1" height="14.2"/><rect x="553" y="464.2" width="1" height="14.6"/><polygon points="549.6999999999999,468.9 555.0,467.8 555.0,470.0 549.6999999999999,471.1"/><polygon points="549.6999999999999,475.2 555.0,474.1 555.0,476.3 549.6999999999999,477.4"/></g><ellipse cx="560" cy="472.4" rx="3.1" ry="2.55" transform="rotate(-22 560 472.4)" fill="#000"/><rect x="563" y="459.1" width="1.1" height="13.299999999999955" fill="#000"/><ellipse cx="564.5" cy="465.5" rx="3.1" ry="2.55" transform="rotate(-22 564.5 465.5)" fill="#000"/><rect x="568" y="451.5" width="1.1" height="14.0" fill="#000"/><ellipse cx="570.1" cy="465.5" rx="3.1" ry="2.55" transform="rotate(-22 570.1 465.5)" fill="#000"/><rect x="573" y="451.5" width="1.1" height="14.0" fill="#000"/><g fill="#000"><rect x="569" y="467.2" width="1" height="14.2"/><rect x="571" y="466.2" width="1" height="14.6"/><polygon points="567.5,470.9 572.8000000000001,469.8 572.8000000000001,472.0 567.5,473.1"/><polygon points="567.5,477.2 572.8000000000001,476.1 572.8000000000001,478.3 567.5,479.4"/></g><ellipse cx="577.3" cy="472.4" rx="3.1" ry="2.55" transform="rotate(-22 577.3 472.4)" fill="#000"/><rect x="580" y="459.1" width="1.1" height="13.299999999999955" fill="#000"/><ellipse cx="635.5" cy="466" rx="3.1" ry="2.55" transform="rotate(-22 635.5 466)" fill="#000"/></g><rect x="32.5" y="361.5" width="130" height="145" fill="#fff" stroke="#000" stroke-width="1"/><g clip-path="url(#clipSmall)"><rect x="33" y="389" width="129" height="1" fill="#5e4040"/><rect x="33" y="394" width="129" height="1" fill="#5e4040"/><rect x="33" y="399" width="129" height="1" fill="#5e4040"/><rect x="33" y="404" width="129" height="1" fill="#5e4040"/><rect x="33" y="409" width="129" height="1" fill="#5e4040"/><g transform="translate(37,389) scale(5)" fill="none" stroke="#5e4040" stroke-linecap="round"><path d="M1.6,2.75 C1.35,2.3 0.8,2.45 0.85,3.0 C0.95,3.6 2.0,3.7 2.4,3.05 C2.75,2.4 2.2,1.7 1.45,1.8 C0.6,1.9 0.1,2.6 0.2,3.25 C0.3,3.9 1.0,4.1 1.65,4.0" stroke-width="0.45"/><path d="M0.2,3.25 C0.2,2.3 0.9,1.6 1.5,0.9 C2.1,0.2 2.35,-0.5 2.15,-1.15 C2.0,-1.6 1.4,-1.7 1.15,-0.9 C1.0,-0.3 1.3,0.6 1.5,1.8 L1.85,4.6" stroke-width="0.36"/><path d="M1.85,4.6 C1.95,5.3 1.5,5.6 1.0,5.4" stroke-width="0.32"/><circle cx="1.05" cy="5.05" r="0.52" fill="#5e4040" stroke="none"/></g><rect x="33" y="429" width="129" height="1" fill="#5e4040"/><rect x="33" y="434" width="129" height="1" fill="#5e4040"/><rect x="33" y="439" width="129" height="1" fill="#5e4040"/><rect x="33" y="444" width="129" height="1" fill="#5e4040"/><rect x="33" y="449" width="129" height="1" fill="#5e4040"/><g transform="translate(37,429) scale(5)" fill="none" stroke="#5e4040" stroke-linecap="round"><path d="M1.6,2.75 C1.35,2.3 0.8,2.45 0.85,3.0 C0.95,3.6 2.0,3.7 2.4,3.05 C2.75,2.4 2.2,1.7 1.45,1.8 C0.6,1.9 0.1,2.6 0.2,3.25 C0.3,3.9 1.0,4.1 1.65,4.0" stroke-width="0.45"/><path d="M0.2,3.25 C0.2,2.3 0.9,1.6 1.5,0.9 C2.1,0.2 2.35,-0.5 2.15,-1.15 C2.0,-1.6 1.4,-1.7 1.15,-0.9 C1.0,-0.3 1.3,0.6 1.5,1.8 L1.85,4.6" stroke-width="0.36"/><path d="M1.85,4.6 C1.95,5.3 1.5,5.6 1.0,5.4" stroke-width="0.32"/><circle cx="1.05" cy="5.05" r="0.52" fill="#5e4040" stroke="none"/></g><rect x="33" y="469" width="129" height="1" fill="#5e4040"/><rect x="33" y="474" width="129" height="1" fill="#5e4040"/><rect x="33" y="479" width="129" height="1" fill="#5e4040"/><rect x="33" y="484" width="129" height="1" fill="#5e4040"/><rect x="33" y="489" width="129" height="1" fill="#5e4040"/><g transform="translate(37,469) scale(5)" fill="none" stroke="#5e4040" stroke-linecap="round"><path d="M1.6,2.75 C1.35,2.3 0.8,2.45 0.85,3.0 C0.95,3.6 2.0,3.7 2.4,3.05 C2.75,2.4 2.2,1.7 1.45,1.8 C0.6,1.9 0.1,2.6 0.2,3.25 C0.3,3.9 1.0,4.1 1.65,4.0" stroke-width="0.45"/><path d="M0.2,3.25 C0.2,2.3 0.9,1.6 1.5,0.9 C2.1,0.2 2.35,-0.5 2.15,-1.15 C2.0,-1.6 1.4,-1.7 1.15,-0.9 C1.0,-0.3 1.3,0.6 1.5,1.8 L1.85,4.6" stroke-width="0.36"/><path d="M1.85,4.6 C1.95,5.3 1.5,5.6 1.0,5.4" stroke-width="0.32"/><circle cx="1.05" cy="5.05" r="0.52" fill="#5e4040" stroke="none"/></g><path d="M43,506 L44.5,502 L46,506 Z" fill="#5e4040"/><g fill="#000"><rect x="91" y="381.2" width="1" height="14.2"/><rect x="93" y="380.2" width="1" height="14.6"/><polygon points="90.10000000000001,384.9 95.4,383.8 95.4,386.0 90.10000000000001,387.1"/><polygon points="90.10000000000001,391.2 95.4,390.1 95.4,392.3 90.10000000000001,393.4"/></g><g fill="#000"><rect x="99" y="374.2" width="1" height="14.2"/><rect x="101" y="373.2" width="1" height="14.6"/><polygon points="98.30000000000001,377.9 103.60000000000001,376.8 103.60000000000001,379.0 98.30000000000001,380.1"/><polygon points="98.30000000000001,384.2 103.60000000000001,383.1 103.60000000000001,385.3 98.30000000000001,386.4"/></g><ellipse cx="99.7" cy="388.9" rx="3.1" ry="2.55" transform="rotate(-22 99.7 388.9)" fill="#000"/><rect x="103" y="374.7" width="1.1" height="14.199999999999989" fill="#000"/><rect x="104.8" y="379" width="10.799999999999997" height="1" fill="#5e4040"/><ellipse cx="108.2" cy="377.6" rx="3.1" ry="2.55" transform="rotate(-22 108.2 377.6)" fill="#000"/><rect x="111" y="364.3" width="1.1" height="13.300000000000011" fill="#000"/><rect x="113.3" y="384" width="11.400000000000006" height="1" fill="#5e4040"/><ellipse cx="116.7" cy="383.8" rx="3.1" ry="2.55" transform="rotate(-22 116.7 383.8)" fill="#000"/><rect x="120" y="369.1" width="1.1" height="14.699999999999989" fill="#000"/><ellipse cx="120.1" cy="380.4" rx="3.1" ry="2.55" transform="rotate(-22 120.1 380.4)" fill="#000"/><rect x="123" y="367" width="1.1" height="13.399999999999977" fill="#000"/><g fill="#000"><rect x="128" y="372.2" width="1" height="14.2"/><rect x="130" y="371.2" width="1" height="14.6"/><polygon points="127.20000000000002,375.9 132.5,374.8 132.5,377.0 127.20000000000002,378.1"/><polygon points="127.20000000000002,382.2 132.5,381.1 132.5,383.3 127.20000000000002,384.4"/></g><rect x="132" y="379" width="25.5" height="1" fill="#5e4040"/><rect x="132" y="384" width="25.5" height="1" fill="#5e4040"/><g fill="#000"><rect x="136" y="372.2" width="1" height="14.2"/><rect x="138" y="371.2" width="1" height="14.6"/><polygon points="134.5,375.9 139.79999999999998,374.8 139.79999999999998,377.0 134.5,378.1"/><polygon points="134.5,382.2 139.79999999999998,381.1 139.79999999999998,383.3 134.5,384.4"/></g><g fill="#000"><rect x="141" y="372.2" width="1" height="14.2"/><rect x="143" y="371.2" width="1" height="14.6"/><polygon points="140.20000000000002,375.9 145.5,374.8 145.5,377.0 140.20000000000002,378.1"/><polygon points="140.20000000000002,382.2 145.5,381.1 145.5,383.3 140.20000000000002,384.4"/></g><ellipse cx="138.3" cy="377.6" rx="3.1" ry="2.55" transform="rotate(-22 138.3 377.6)" fill="#000"/><rect x="140" y="364.3" width="1.1" height="13.300000000000011" fill="#000"/><ellipse cx="146.2" cy="377.6" rx="3.1" ry="2.55" transform="rotate(-22 146.2 377.6)" fill="#000"/><rect x="149" y="364.3" width="1.1" height="13.300000000000011" fill="#000"/><ellipse cx="150.2" cy="377.6" rx="3.1" ry="2.55" transform="rotate(-22 150.2 377.6)" fill="#000"/><rect x="153" y="364.3" width="1.1" height="13.300000000000011" fill="#000"/><g fill="#000"><rect x="159" y="382.2" width="1" height="14.2"/><rect x="161" y="381.2" width="1" height="14.6"/><polygon points="157.8,385.9 163.1,384.8 163.1,387.0 157.8,388.1"/><polygon points="157.8,392.2 163.1,391.1 163.1,393.3 157.8,394.4"/></g><g fill="#000"><rect x="140" y="398.2" width="1" height="14.2"/><rect x="142" y="397.2" width="1" height="14.6"/><polygon points="139.1,401.9 144.39999999999998,400.8 144.39999999999998,403.0 139.1,404.1"/><polygon points="139.1,408.2 144.39999999999998,407.1 144.39999999999998,409.3 139.1,410.4"/></g><ellipse cx="147.5" cy="404.5" rx="3.1" ry="2.55" transform="rotate(-22 147.5 404.5)" fill="#000"/><ellipse cx="149" cy="406" rx="3.1" ry="2.55" transform="rotate(-22 149 406)" fill="#000"/><rect x="153" y="389.7" width="1.1" height="16.30000000000001" fill="#000"/><g fill="#000"><rect x="99" y="421.7" width="1" height="14.2"/><rect x="101" y="420.7" width="1" height="14.6"/><polygon points="98.30000000000001,425.4 103.60000000000001,424.3 103.60000000000001,426.5 98.30000000000001,427.6"/><polygon points="98.30000000000001,431.7 103.60000000000001,430.6 103.60000000000001,432.8 98.30000000000001,433.9"/></g><ellipse cx="107.7" cy="428.7" rx="3.1" ry="2.55" transform="rotate(-22 107.7 428.7)" fill="#000"/><rect x="111" y="414.3" width="1.1" height="14.399999999999977" fill="#000"/><ellipse cx="117.9" cy="430.4" rx="3.1" ry="2.55" transform="rotate(-22 117.9 430.4)" fill="#000"/><ellipse cx="120.7" cy="430.4" rx="3.1" ry="2.55" transform="rotate(-22 120.7 430.4)" fill="#000"/><rect x="121" y="417.4" width="1.1" height="13.0" fill="#000"/><rect x="123" y="417.4" width="1.1" height="12.600000000000023" fill="#000"/><g fill="#000"><rect x="128" y="422.2" width="1" height="14.2"/><rect x="130" y="421.2" width="1" height="14.6"/><polygon points="126.9,425.9 132.2,424.8 132.2,427.0 126.9,428.1"/><polygon points="126.9,432.2 132.2,431.1 132.2,433.3 126.9,434.4"/></g><g fill="#000"><rect x="127" y="432.2" width="1" height="14.2"/><rect x="129" y="431.2" width="1" height="14.6"/><polygon points="125.9,435.9 131.2,434.8 131.2,437.0 125.9,438.1"/><polygon points="125.9,442.2 131.2,441.1 131.2,443.3 125.9,444.4"/></g><ellipse cx="123.5" cy="448.5" rx="3.1" ry="2.55" transform="rotate(-22 123.5 448.5)" fill="#000"/><rect x="127" y="430" width="1.1" height="18.5" fill="#000"/><ellipse cx="130.5" cy="441.5" rx="3.1" ry="2.55" transform="rotate(-22 130.5 441.5)" fill="#000"/><ellipse cx="133.5" cy="439.5" rx="3.1" ry="2.55" transform="rotate(-22 133.5 439.5)" fill="#000"/><ellipse cx="136" cy="437" rx="3.1" ry="2.55" transform="rotate(-22 136 437)" fill="#000"/><rect x="138" y="421.5" width="1.1" height="18.5" fill="#000"/><ellipse cx="137" cy="429.5" rx="3.1" ry="2.55" transform="rotate(-22 137 429.5)" fill="#000"/><rect x="140" y="414.5" width="1.1" height="15.0" fill="#000"/><ellipse cx="119.6" cy="478.8" rx="3.1" ry="2.55" transform="rotate(-22 119.6 478.8)" fill="#000"/><rect x="123" y="463.9" width="1.1" height="14.900000000000034" fill="#000"/><rect x="103" y="501" width="1.1" height="5" fill="#000"/><rect x="120" y="501" width="1.1" height="5" fill="#000"/><rect x="140" y="499" width="1.1" height="7" fill="#000"/><rect x="149" y="499" width="1.1" height="7" fill="#000"/><rect x="153" y="497" width="1.1" height="9" fill="#000"/></g>
<circle cx="105" cy="79" r="3.1" fill="url(#ing)"/><circle cx="105" cy="177" r="3.1" fill="url(#ing)"/><circle cx="148" cy="79" r="3.1" fill="url(#ing)"/><circle cx="148" cy="177" r="3.1" fill="url(#ing)"/><circle cx="207" cy="88.5" r="3.1" fill="url(#ing)"/><circle cx="337" cy="60" r="3.1" fill="url(#ing)"/><circle cx="418" cy="60" r="3.1" fill="url(#ing)"/><circle cx="437" cy="118" r="3.1" fill="url(#ing)"/><circle cx="276" cy="199" r="3.1" fill="url(#ing)"/><circle cx="346" cy="124.5" r="3.1" fill="url(#ing)"/><circle cx="346" cy="205.5" r="3.1" fill="url(#ing)"/><circle cx="366" cy="124.5" r="3.1" fill="url(#ing)"/><circle cx="366" cy="205.5" r="3.1" fill="url(#ing)"/><circle cx="386" cy="124.5" r="3.1" fill="url(#ing)"/><circle cx="386" cy="205.5" r="3.1" fill="url(#ing)"/><circle cx="406" cy="124.5" r="3.1" fill="url(#ing)"/><circle cx="406" cy="205.5" r="3.1" fill="url(#ing)"/><circle cx="266" cy="234" r="3.1" fill="url(#ing)"/><circle cx="281" cy="234" r="3.1" fill="url(#ing)"/><circle cx="296" cy="234" r="3.1" fill="url(#ing)"/><circle cx="311" cy="234" r="3.1" fill="url(#ing)"/><circle cx="289" cy="282.5" r="3.1" fill="url(#ing)"/><circle cx="125" cy="286.5" r="3.1" fill="url(#ing)"/><circle cx="150" cy="286.5" r="3.1" fill="url(#ing)"/><circle cx="175" cy="286.5" r="3.1" fill="url(#ing)"/><circle cx="150" cy="330.5" r="3.1" fill="url(#ing)"/><circle cx="371" cy="310" r="3.1" fill="url(#ing)"/><circle cx="371" cy="500" r="3.1" fill="url(#ing)"/><circle cx="503" cy="310" r="3.1" fill="url(#ing)"/><circle cx="503" cy="500" r="3.1" fill="url(#ing)"/><circle cx="76" cy="357.5" r="3.1" fill="url(#ing)"/><circle cx="76" cy="510.5" r="3.1" fill="url(#ing)"/><circle cx="120" cy="357.5" r="3.1" fill="url(#ing)"/><circle cx="120" cy="510.5" r="3.1" fill="url(#ing)"/>
</svg>
<div style="position:absolute;left:268.5px;top:4.76px;font-size:13.5px;line-height:15.524999999999999px;letter-spacing:0.4px;color:#505050;white-space:pre;">poly–pointer–nonlinear–demo</div><div style="position:absolute;left:121.5px;top:109.5px;font-family:'Liberation Serif',serif;font-weight:bold;font-size:16px;line-height:10.5px;color:#4a2c2c">2<br>4</div><div style="position:absolute;left:121.5px;top:144.5px;font-family:'Liberation Serif',serif;font-weight:bold;font-size:16px;line-height:10.5px;color:#4a2c2c">2<br>4</div><div style="position:absolute;left:79px;top:92.5px;font-size:8px;line-height:10px;color:#5e4040">=60</div><div style="position:absolute;left:95px;top:43.32px;font-size:13px;line-height:14.95px;letter-spacing:0.1px;color:#000;white-space:pre;">Voices</div><div style="position:absolute;left:199.2px;top:40.32px;font-size:13px;line-height:14.95px;letter-spacing:0.22px;color:#000;white-space:pre;">Length scaler</div><div style="position:absolute;left:199.5px;top:67.94px;font-size:12px;line-height:13.799999999999999px;letter-spacing:0px;color:#000;white-space:pre;">1</div><div style="position:absolute;left:307.5px;top:37.82px;font-size:13px;line-height:14.95px;letter-spacing:-0.1px;color:#000;white-space:pre;">(0 1000)</div><div style="position:absolute;left:388.5px;top:37.82px;font-size:13px;line-height:14.95px;letter-spacing:-0.1px;color:#000;white-space:pre;">(1000 0)</div><div style="position:absolute;left:429.5px;top:96.94px;font-size:12px;line-height:13.799999999999999px;letter-spacing:0px;color:#000;white-space:pre;">8</div><div style="position:absolute;left:257px;top:177.94px;font-size:12px;line-height:13.799999999999999px;letter-spacing:0.1px;color:#000;white-space:pre;">1000</div><div style="position:absolute;left:223.5px;top:112.80px;font-size:13px;line-height:14.8px;letter-spacing:0.3px;color:#000;white-space:pre;">Resolution
(1000 works
best at the
moment).</div><div style="position:absolute;left:438.9px;top:136.50px;font-size:13px;line-height:14.6px;letter-spacing:0.32px;color:#000;white-space:pre;">Time pointer as bpf self
(1000*1000).
Floats are more precise.</div><div style="position:absolute;left:0;top:200px;width:230px;height:82px;overflow:hidden"><div style="position:absolute;left:5.8px;top:11.30px;font-size:13px;line-height:14.8px;letter-spacing:0.48px;color:#000;white-space:pre;">Similar, but takes a
multiseq as an input.
Another retrograde
brings us back to
original.</div></div><div style="position:absolute;left:348.6px;top:219.37px;font-size:13px;line-height:14.65px;letter-spacing:0.47px;color:#000;white-space:pre;">A curve 1000 to 0 will give retrograde, 0 to
1000 gives original. Other shapes are possible
and more flat curves may granulate the music.</div><div style="position:absolute;left:252.4px;top:265.40px;font-size:11.5px;line-height:13.225px;letter-spacing:0.6px;color:#000;white-space:pre;">poly-pointer</div><div style="position:absolute;left:101.6px;top:313.00px;font-size:11.5px;line-height:13.225px;letter-spacing:0.6px;color:#000;white-space:pre;">multiseq-pointer</div>
</body></html>
